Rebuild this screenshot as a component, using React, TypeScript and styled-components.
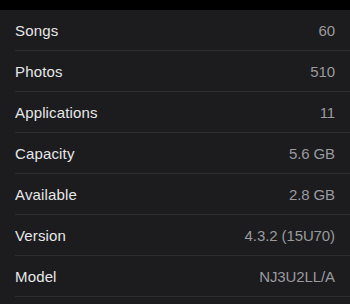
import React from "react";
import styled, { createGlobalStyle } from "styled-components";

const Global = createGlobalStyle`
  html, body { margin: 0; padding: 0; background: #1c1c1e; }
  body { font-family: "Liberation Sans", Arial, sans-serif; }
`;

const Screen = styled.div`
  width: 350px;
  height: 304px;
  background: #1c1c1e;
  display: flex;
  flex-direction: column;
  overflow: hidden;
`;

const TopBar = styled.div`
  height: 10px;
  background: #000;
  flex-shrink: 0;
`;

const List = styled.div`
  display: flex;
  flex-direction: column;
  padding-left: 15px;
`;

const Row = styled.div`
  height: 41px;
  box-sizing: border-box;
  display: flex;
  align-items: center;
  justify-content: space-between;
  padding-right: 15px;
  padding-top: 1px;
  border-bottom: 1px solid #2e2e30;
  font-size: 15px;
`;

const Label = styled.span`
  color: #e6e6e8;
  letter-spacing: 0.15px;
`;

const Value = styled.span`
  color: #9a9a9e;
  letter-spacing: -0.1px;
`;

const rows: [string, string][] = [
  ["Songs", "60"],
  ["Photos", "510"],
  ["Applications", "11"],
  ["Capacity", "5.6 GB"],
  ["Available", "2.8 GB"],
  ["Version", "4.3.2 (15U70)"],
  ["Model", "NJ3U2LL/A"],
];

export default function App() {
  return (
    <>
      <Global />
      <Screen>
        <TopBar />
        <List>
          {rows.map(([l, v]) => (
            <Row key={l}>
              <Label>{l}</Label>
              <Value>{v}</Value>
            </Row>
          ))}
        </List>
      </Screen>
    </>
  );
}
